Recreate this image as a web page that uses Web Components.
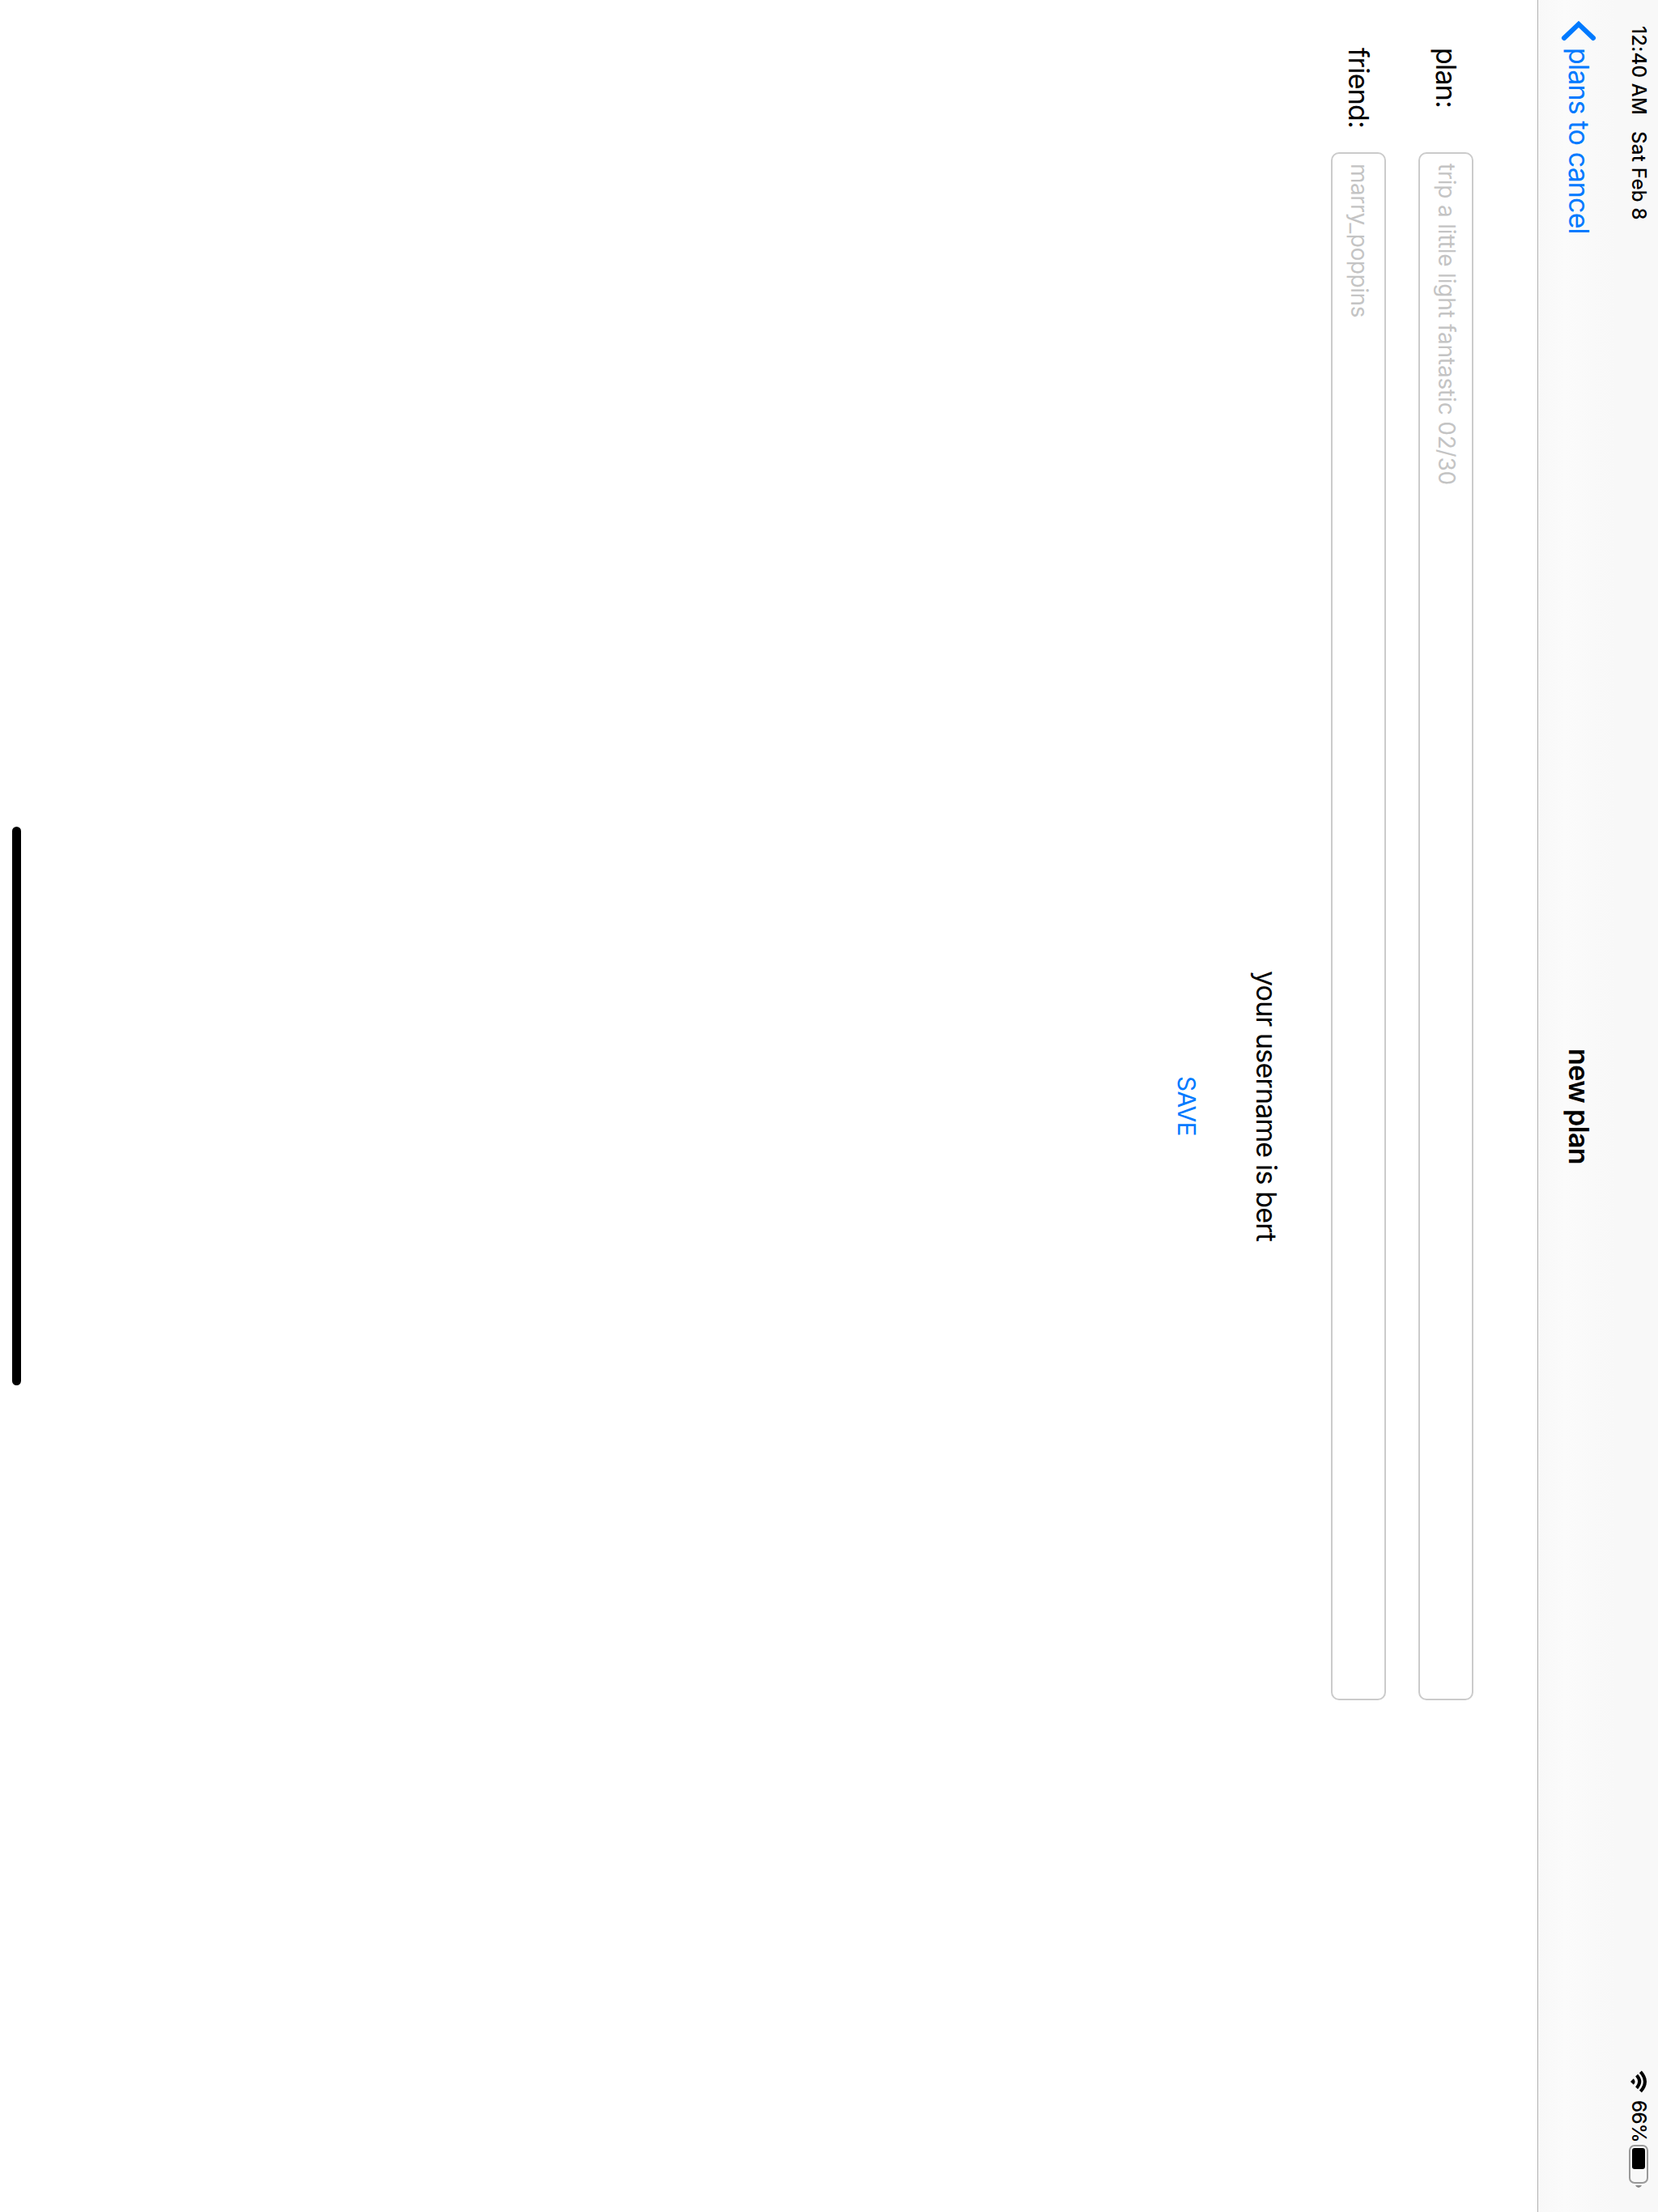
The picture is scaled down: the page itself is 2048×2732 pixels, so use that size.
<!DOCTYPE html>
<html lang="en">
<head>
<meta charset="utf-8">
<title>new plan</title>
<style>
html,body{margin:0;width:2048px;height:2732px;overflow:hidden;background:#fff}
</style>
</head>
<body>
<tablet-screen>
  <status-bar slot="top"></status-bar>
  <nav-bar slot="top"><fit-text slot="back" width="230">plans to cancel</fit-text><fit-text slot="title" width="143">new plan</fit-text></nav-bar>
  <form-row><fit-text slot="label" width="74">plan:</fit-text><fit-text slot="hint" width="397">trip a little light fantastic 02/30</fit-text></form-row>
  <form-row><fit-text slot="label" width="99">friend:</fit-text><fit-text slot="hint" width="190">marry_poppins</fit-text></form-row>
  <form-note><fit-text width="334">your username is bert</fit-text></form-note>
  <save-button><fit-text width="74">SAVE</fit-text></save-button>
</tablet-screen>
<script>
const define = (name, html, setup) => customElements.define(name, class extends HTMLElement {
  constructor() {
    super();
    this.attachShadow({mode: 'open'}).innerHTML = html;
  }
  connectedCallback() { if (setup) setup(this); }
});

// Tracks its text so that the line takes up the given inline size.
define('fit-text', `<style>:host{display:block;white-space:pre;flex:none}span{display:inline-block}</style><span><slot></slot></span>`, el => {
  const target = +el.getAttribute('width');
  const span = el.shadowRoot.querySelector('span');
  const fit = () => {
    span.style.letterSpacing = '0px';
    const natural = parseFloat(getComputedStyle(span).inlineSize);
    span.style.letterSpacing = ((target - natural) / el.textContent.length) + 'px';
    span.style.inlineSize = target + 'px';
  };
  requestAnimationFrame(fit);
});

// Icons are drawn upright and turned a quarter to follow the sideways text.
define('status-bar', `<style>
:host{display:flex;block-size:48px;align-items:center;font-size:24px;font-weight:500;padding-inline:32px 29px;box-sizing:border-box}
.date{margin-inline-start:20px}.gap{flex:1}
svg{display:block;flex:none}
.wifi{inline-size:28px;block-size:20px;margin-inline-end:9px}
.battery{inline-size:54px;block-size:24px;margin-inline-start:3px}
</style>
<fit-text width="110">12:40 AM</fit-text><fit-text class="date" width="110">Sat Feb 8</fit-text>
<div class="gap"></div>
<svg class="wifi" viewBox="0 0 20 28"><g transform="translate(20 0) rotate(90)"><g fill="none" stroke="#000" stroke-width="4"><path d="M1.8 7.6Q14 -3.4 26.2 7.6"/><path d="M6.2 12.4Q14 5.2 21.8 12.4"/></g><path d="M14 20L10.2 16.2Q14 12.6 17.8 16.2Z"/></g></svg>
<fit-text width="52">66%</fit-text>
<svg class="battery" viewBox="0 0 24 54"><g transform="translate(24 0) rotate(90)"><rect x="1" y="1" width="46" height="22" rx="6" fill="none" stroke="#999" stroke-width="2"/><rect x="4" y="4" width="26" height="16" rx="3.2"/><path d="M50 8Q53 9.5 53 12T50 16Z" fill="#8a8a8a"/></g></svg>`);

define('nav-bar', `<style>
:host{display:grid;grid-template-columns:1fr auto 1fr;align-items:center;block-size:100px;font-size:34px}
.back{display:flex;align-items:center;color:#007aff;padding-inline-start:24px}
svg{display:block;flex:none;inline-size:27px;block-size:44px;margin-inline-end:8px}
.title{font-weight:600}
</style>
<div class="back"><svg viewBox="0 0 44 27"><path d="M4 23L22 5.9L40 23" fill="none" stroke="#007aff" stroke-width="6" stroke-linecap="round"/></svg><slot name="back"></slot></div>
<div class="title"><slot name="title"></slot></div><div></div>`);

define('form-row', `<style>
:host{display:flex;align-items:center;block-size:68px;margin-block-end:40px}
.label{inline-size:129px;padding-inline-start:59px;font-size:34px}
.field{box-sizing:border-box;inline-size:1912px;block-size:68px;border:2px solid #cbcbcb;border-radius:10px;display:flex;align-items:center;padding-block-end:2px;padding-inline-start:12px;font-size:28px;color:#c4c4c4}
</style><div class="label"><slot name="label"></slot></div><div class="field"><slot name="hint"></slot></div>`);

define('form-note', `<style>:host{display:flex;justify-content:center;align-items:center;block-size:40px;margin-block-start:60px;font-size:34px}</style><slot></slot>`);
define('save-button', `<style>:host{display:flex;justify-content:center;align-items:center;block-size:40px;margin-block-start:58px;font-size:30px;color:#007aff}</style><slot></slot>`);

define('tablet-screen', `<style>
:host{writing-mode:vertical-rl;text-orientation:sideways;display:flex;flex-direction:column;box-sizing:border-box;inline-size:2732px;block-size:2048px;background:#fff;color:#000;font-family:Inter,"Liberation Sans",sans-serif;line-height:40px}
header{background:linear-gradient(to left,#f8f8f8 0 50px,#f9f9f9 80px,#fbfbfb 115px,#f9f9f9 135px,#f8f8f8 148px);border-block-end:1px solid #b2b2b2}
main{flex:1;padding-block-start:79px}
.home{inline-size:690px;block-size:11px;border-radius:6px;background:#000;margin-inline:auto;margin-block-end:15px}
</style><header><slot name="top"></slot></header><main><slot></slot></main><div class="home"></div>`);
</script>
</body>
</html>
